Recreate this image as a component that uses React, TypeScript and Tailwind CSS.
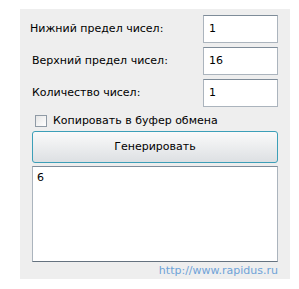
const fields = [
  { label: 'Нижний предел чисел:', value: '1', shift: 'pl-[10px]' },
  { label: 'Верхний предел чисел:', value: '16', shift: 'pl-[12px]' },
  { label: 'Количество чисел:', value: '1', shift: 'pl-[12px]' },
]

export default function App() {
  return (
    <div className="h-[289px] w-[299px] bg-white pl-[20px] pt-[9px] font-['DejaVu_Sans',sans-serif] text-[11px] text-black">
      <div className="flex h-[270px] w-[270px] flex-col bg-[#eeeeee] pr-[12px] pt-[6px]">
        <div className="flex flex-col gap-[4px]">
          {fields.map((f) => (
            <div key={f.label} className="flex items-center">
              <span className={`flex-1 ${f.shift}`}>{f.label}</span>
              <div className="flex h-[28px] w-[75px] items-center border border-[#abb4bd] border-t-[#7e8c99] bg-white pl-[5px]">
                {f.value}
              </div>
            </div>
          ))}
        </div>
        <label className="mt-[6px] flex h-[16px] items-center gap-[6px] pl-[15px]">
          <span className="h-[12px] w-[12px] border border-[#8f9aa5] bg-gradient-to-br from-[#e6e6e6] to-white" />
          <span>Копировать в буфер обмена</span>
        </label>
        <div className="ml-[12px] mt-[2px] flex h-[33px] items-center justify-center rounded-[3px] border border-[#3c9fb8] bg-gradient-to-b from-[#fafafa] to-[#dde0e3]">
          Генерировать
        </div>
        <div className="ml-[12px] mt-[3px] h-[97px] border border-[#abb4bd] border-t-[#7e8c99] border-b-[#65727f] bg-white pl-[4px] pt-[5px] leading-none">
          6
        </div>
        <div className="mt-[1px] text-right text-[#6ea3d8]">http://www.rapidus.ru</div>
      </div>
    </div>
  )
}
